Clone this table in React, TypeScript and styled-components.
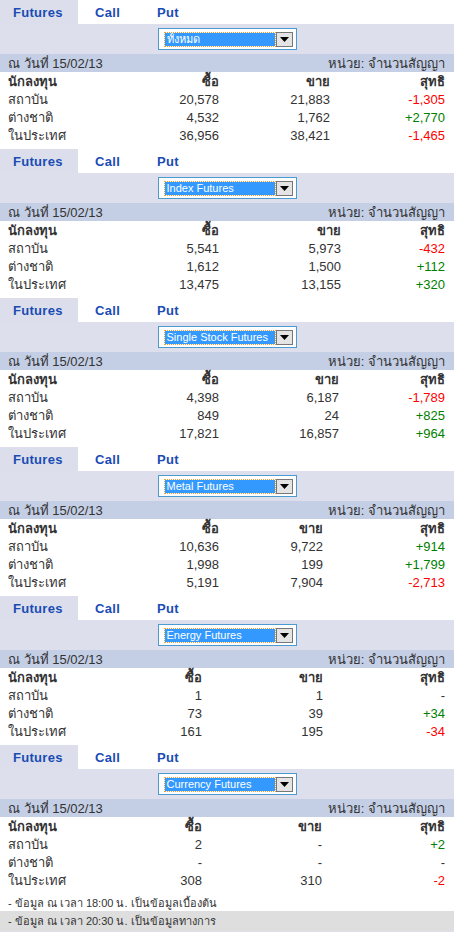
import styled, { createGlobalStyle } from 'styled-components';

type Row = { name: string; buy: string; sell: string; net: string };

type Section = {
    product: string;
    buyEnd: number;
    sellEnd: number;
    rows: Row[];
};

const sections: Section[] = [
    {
        product: 'ทั้งหมด', buyEnd: 219, sellEnd: 330,
        rows: [
            { name: 'สถาบัน', buy: '20,578', sell: '21,883', net: '-1,305' },
            { name: 'ต่างชาติ', buy: '4,532', sell: '1,762', net: '+2,770' },
            { name: 'ในประเทศ', buy: '36,956', sell: '38,421', net: '-1,465' },
        ],
    },
    {
        product: 'Index Futures', buyEnd: 219, sellEnd: 341,
        rows: [
            { name: 'สถาบัน', buy: '5,541', sell: '5,973', net: '-432' },
            { name: 'ต่างชาติ', buy: '1,612', sell: '1,500', net: '+112' },
            { name: 'ในประเทศ', buy: '13,475', sell: '13,155', net: '+320' },
        ],
    },
    {
        product: 'Single Stock Futures', buyEnd: 219, sellEnd: 339,
        rows: [
            { name: 'สถาบัน', buy: '4,398', sell: '6,187', net: '-1,789' },
            { name: 'ต่างชาติ', buy: '849', sell: '24', net: '+825' },
            { name: 'ในประเทศ', buy: '17,821', sell: '16,857', net: '+964' },
        ],
    },
    {
        product: 'Metal Futures', buyEnd: 219, sellEnd: 323,
        rows: [
            { name: 'สถาบัน', buy: '10,636', sell: '9,722', net: '+914' },
            { name: 'ต่างชาติ', buy: '1,998', sell: '199', net: '+1,799' },
            { name: 'ในประเทศ', buy: '5,191', sell: '7,904', net: '-2,713' },
        ],
    },
    {
        product: 'Energy Futures', buyEnd: 202, sellEnd: 323,
        rows: [
            { name: 'สถาบัน', buy: '1', sell: '1', net: '-' },
            { name: 'ต่างชาติ', buy: '73', sell: '39', net: '+34' },
            { name: 'ในประเทศ', buy: '161', sell: '195', net: '-34' },
        ],
    },
    {
        product: 'Currency Futures', buyEnd: 202, sellEnd: 322,
        rows: [
            { name: 'สถาบัน', buy: '2', sell: '-', net: '+2' },
            { name: 'ต่างชาติ', buy: '-', sell: '-', net: '-' },
            { name: 'ในประเทศ', buy: '308', sell: '310', net: '-2' },
        ],
    },
];

const tabs = [
    { label: 'Futures', width: 78, pad: 13, active: true },
    { label: 'Call', width: 62, pad: 17, active: false },
    { label: 'Put', width: 62, pad: 17, active: false },
];

function netTone(v: string) {
    if (v.startsWith('+')) return 'up';
    if (v.startsWith('-') && v.length > 1) return 'down';
    return 'flat';
}

export default function App() {
    return (
        <>
            <GlobalStyle />
            <Page>
                {sections.map((s) => (
                    <Block key={s.product}>
                        <TabBar>
                            {tabs.map((t) => (
                                <Tab key={t.label} $width={t.width} $pad={t.pad} $active={t.active}>
                                    {t.label}
                                </Tab>
                            ))}
                        </TabBar>
                        <SelectBand>
                            <FakeSelect>
                                <SelectValue>{s.product}</SelectValue>
                                <DropButton>
                                    <svg width="9" height="5" viewBox="0 0 9 5">
                                        <path d="M0 0h9L4.5 5z" fill="#000" />
                                    </svg>
                                </DropButton>
                            </FakeSelect>
                        </SelectBand>
                        <DateBand>
                            <span>ณ วันที่ 15/02/13</span>
                            <span>หน่วย: จำนวนสัญญา</span>
                        </DateBand>
                        <Grid $buyEnd={s.buyEnd} $sellEnd={s.sellEnd}>
                            <HeadCell>นักลงทุน</HeadCell>
                            <HeadCell $right>ซื้อ</HeadCell>
                            <HeadCell $right>ขาย</HeadCell>
                            <HeadCell $right>สุทธิ</HeadCell>
                            {s.rows.map((r) => (
                                <RowGroup key={r.name}>
                                    <Cell>{r.name}</Cell>
                                    <Cell $right>{r.buy}</Cell>
                                    <Cell $right>{r.sell}</Cell>
                                    <Cell $right $tone={netTone(r.net)}>{r.net}</Cell>
                                </RowGroup>
                            ))}
                        </Grid>
                    </Block>
                ))}
                <Note>- ข้อมูล ณ เวลา 18:00 น. เป็นข้อมูลเบื้องต้น</Note>
                <Note $shaded>- ข้อมูล ณ เวลา 20:30 น. เป็นข้อมูลทางการ</Note>
                <BottomBand />
            </Page>
        </>
    );
}

const GlobalStyle = createGlobalStyle`
    html, body {
        margin: 0;
        padding: 0;
        background: #fff;
    }
    body {
        font-family: Tahoma, "Liberation Sans", "DejaVu Sans", sans-serif;
        font-size: 13px;
        color: #333;
    }
`;

const Page = styled.div`
    width: 454px;
    display: flex;
    flex-direction: column;
`;

const Block = styled.section`
    display: flex;
    flex-direction: column;
    padding-bottom: 5px;
`;

const TabBar = styled.div`
    display: flex;
    height: 24px;
    background: #fff;
`;

const Tab = styled.div<{ $width: number; $pad: number; $active?: boolean }>`
    width: ${({ $width }) => $width}px;
    padding-left: ${({ $pad }) => $pad}px;
    box-sizing: border-box;
    display: flex;
    align-items: center;
    font-weight: bold;
    font-size: 13px;
    letter-spacing: 0.3px;
    color: #1a4cb4;
    background: ${({ $active }) => ($active ? '#dcdfeb' : '#fff')};
`;

const SelectBand = styled.div`
    height: 30px;
    display: flex;
    align-items: center;
    justify-content: center;
    background: #dde0ec;
`;

const FakeSelect = styled.div`
    width: 139px;
    height: 22px;
    box-sizing: border-box;
    border: 1px solid #4b9bd1;
    background: #fff;
    display: flex;
    align-items: center;
    padding: 0 3px 0 6px;
    gap: 1px;
`;

const SelectValue = styled.div`
    flex: 1;
    height: 13px;
    line-height: 13px;
    background: #3399ff;
    color: #fff;
    font-size: 11px;
    padding-left: 2px;
    outline: 1px dotted #e8a040;
    white-space: nowrap;
    overflow: hidden;
`;

const DropButton = styled.div`
    width: 17px;
    height: 15px;
    box-sizing: border-box;
    border: 1px solid #777;
    background: #e4e4e4;
    display: flex;
    align-items: center;
    justify-content: center;
`;

const DateBand = styled.div`
    height: 18px;
    display: flex;
    align-items: center;
    justify-content: space-between;
    padding: 0 9px 0 8px;
    background: #c4cfe6;
    color: #333;
`;

const Grid = styled.div<{ $buyEnd: number; $sellEnd: number }>`
    display: grid;
    grid-template-columns: ${({ $buyEnd }) => $buyEnd - 8 - 80}px 80px ${({ $buyEnd, $sellEnd }) => $sellEnd - $buyEnd}px 1fr;
    grid-auto-rows: 18px;
    padding: 0 9px 0 8px;
`;

const RowGroup = styled.div`
    display: contents;
`;

const Cell = styled.div<{ $right?: boolean; $tone?: string }>`
    display: flex;
    align-items: center;
    justify-content: ${({ $right }) => ($right ? 'flex-end' : 'flex-start')};
    white-space: nowrap;
    color: ${({ $tone }) => ($tone === 'up' ? '#008000' : $tone === 'down' ? '#ff0000' : '#333')};
`;

const HeadCell = styled(Cell)`
    font-weight: bold;
`;

const Note = styled.div<{ $shaded?: boolean }>`
    height: ${({ $shaded }) => ($shaded ? 20 : 17)}px;
    display: flex;
    align-items: center;
    padding-left: 8px;
    font-size: 11px;
    color: #333;
    background: ${({ $shaded }) => ($shaded ? '#dedede' : '#fff')};
`;

const BottomBand = styled.div`
    height: 4px;
    background: #dde0ec;
`;
